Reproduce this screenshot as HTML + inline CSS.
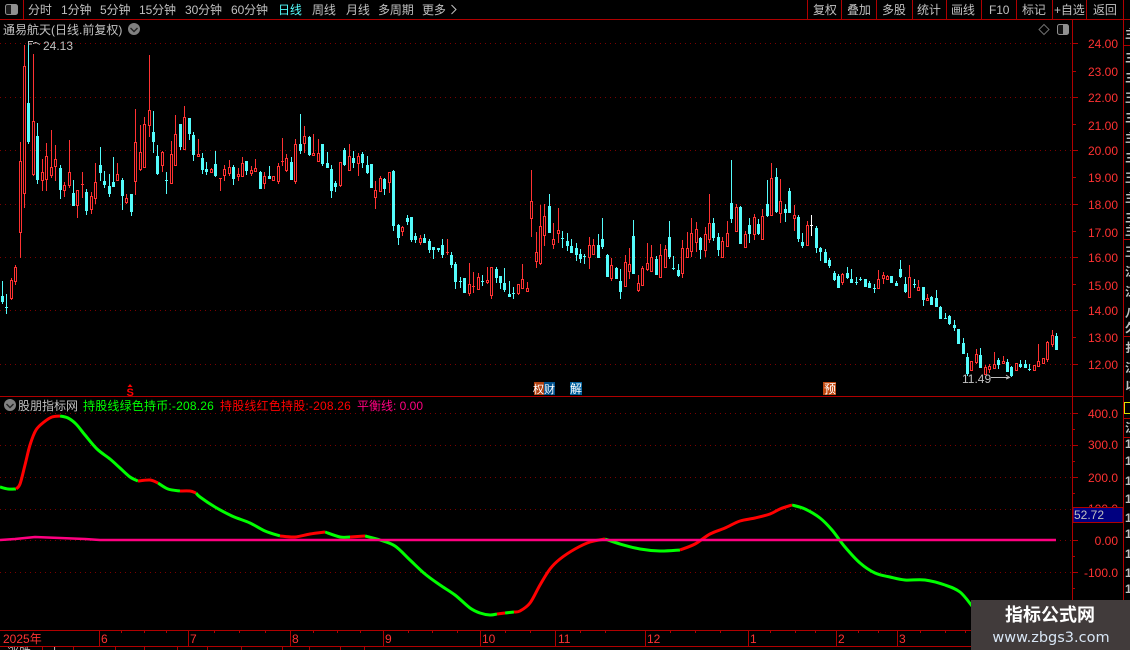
<!DOCTYPE html>
<html><head><meta charset="utf-8"><style>
html,body{margin:0;padding:0;background:#000;width:1130px;height:650px;overflow:hidden}
svg{display:block;position:absolute;left:0;top:0}
text{font-family:"Liberation Sans","WenQuanYi Zen Hei","Noto Sans CJK SC",sans-serif;font-size:12px;fill:#c0c0c0}
.ax{fill:#ff3232;text-anchor:end}
.cj{letter-spacing:-.1px}
.ls{letter-spacing:.2px}
</style></head><body>
<svg width="1130" height="650" viewBox="0 0 1130 650" xmlns="http://www.w3.org/2000/svg">
<rect width="1130" height="650" fill="#000"/>
<g stroke="#7c0000" stroke-dasharray="1 4" shape-rendering="crispEdges" fill="none">
<path d="M0 43.5H1072M0 97.5H1072M0 150.5H1072M0 204.5H1072M0 257.5H1072M0 310.5H1072M0 364.5H1072"/>
<path d="M0 413.5H1072M0 445.5H1072M0 477.5H1072M0 509.5H1072M0 540.5H1072M0 572.5H1072"/>
</g>
<g id="cd" shape-rendering="crispEdges"></g>

<g fill="none" stroke-width="3" stroke-linejoin="round" stroke-linecap="butt">
<g stroke="#00ff00">
<polyline class="sm" points="0,487 8,489 16,489"/>
<polyline class="sm" points="60,416 68,418 76,424 85,435 97,449 110,459 120,468 130,477 138,481"/>
<polyline class="sm" points="158,483 168,489 180,491"/>
<polyline class="sm" points="196,493 200,497 215,507 232,516 250,523 265,531 280,536"/>
<polyline class="sm" points="325,532 340,537 350,537"/>
<polyline class="sm" points="365,536 380,540 395,546 410,560 425,574 440,585 455,595 470,608 480,613 490,615 497,614"/>
<polyline class="sm" points="505,613 514,612"/>
<polyline class="sm" points="605,539 620,544 640,549 660,551 680,550"/>
<polyline class="sm" points="792,505 805,509 820,518 832,530 845,547 860,563 875,573 890,577 905,580 925,580 945,585 960,592 972,606"/>
</g>
<g stroke="#ff0000">
<polyline class="sm" points="16,489 20,484 25,465 30,445 36,430 44,422 52,417 60,416"/>
<polyline class="sm" points="138,481 150,480 158,483"/>
<polyline class="sm" points="180,491 190,491 196,493"/>
<polyline class="sm" points="280,536 295,537 310,534 325,532"/>
<polyline class="sm" points="350,537 365,536"/>
<polyline class="sm" points="497,614 505,613"/>
<polyline class="sm" points="514,612 520,611 530,603 540,585 550,569 560,559 575,549 590,542 605,539"/>
<polyline class="sm" points="680,550 695,544 710,534 725,528 740,521 755,518 770,514 780,509 792,505"/>
</g>
<polyline stroke="#ff0080" stroke-width="2.4" points="0,540 15,539 25,538 35,537 60,538 85,539 100,540 1056,540"/>
</g>

<g fill="none" stroke="#b00000" stroke-width="1" shape-rendering="crispEdges">
<path d="M0 19.5H1130M23.5 0V19M807.5 0V19M841.5 0V19M876.5 0V19M912.5 0V19M946.5 0V19M981.5 0V19M1016.5 0V19M1052.5 0V19M1086.5 0V19M1123.5 0V650M1072.5 19V646"/>
<path d="M0 396.5H1123M0 630.5H1123M0 646.5H1123"/>
<path d="M1123 45.5H1130M1123 239.5H1130M1123 336.5H1130M1123 418.5H1130M1123 437.5H1130"/>
<path d="M99.5 630V646M188.5 630V646M290.5 630V646M383.5 630V646M480.5 630V646M555.5 630V646M645.5 630V646M748.5 630V646M836.5 630V646M897.5 630V646"/>
<path d="M121.5 630V633M144.5 630V633M166.5 630V633M214.5 630V633M239.5 630V633M265.5 630V633M313.5 630V633M337.5 630V633M360.5 630V633M408.5 630V633M432.5 630V633M457.5 630V633M505.5 630V633M530.5 630V633M580.5 630V633M605.5 630V633M670.5 630V633M695.5 630V633M720.5 630V633M770.5 630V633M795.5 630V633M815.5 630V633M858.5 630V633M878.5 630V633M920.5 630V633M945.5 630V633M965.5 630V633"/>
<path d="M42.5 646V650M73.5 646V650M115.5 646V650M144.5 646V650M177.5 646V650M207.5 646V650M241.5 646V650M282.5 646V650M309.5 646V650M340.5 646V650M364.5 646V650"/>
<path d="M1073 43.5H1078M1073 71.5H1076M1073 97.5H1078M1073 124.5H1076M1073 150.5H1078M1073 177.5H1076M1073 204.5H1078M1073 231.5H1076M1073 257.5H1078M1073 284.5H1076M1073 310.5H1078M1073 337.5H1076M1073 364.5H1078"/>
<path d="M1073 413.5H1078M1073 429.5H1075M1073 445.5H1078M1073 461.5H1075M1073 477.5H1078M1073 493.5H1075M1073 540.5H1078M1073 556.5H1075M1073 572.5H1078M1073 588.5H1075"/>
</g>

<!-- top bar -->
<rect x="5.5" y="4.5" width="12" height="10" rx="2" fill="#1c1c1c" stroke="#909090"/>
<rect x="11" y="5" width="6" height="9" fill="#909090"/>
<g class="cj">
<text x="28" y="14">分时</text><text x="61" y="14">1分钟</text><text x="100" y="14">5分钟</text>
<text x="139" y="14">15分钟</text><text x="185" y="14">30分钟</text><text x="231" y="14">60分钟</text>
<text x="278" y="14" style="fill:#54fcfc">日线</text><text x="312" y="14">周线</text><text x="346" y="14">月线</text>
<text x="378" y="14">多周期</text><text x="422" y="14">更多</text>
<text x="813" y="14">复权</text><text x="847" y="14">叠加</text><text x="882" y="14">多股</text><text x="917" y="14">统计</text>
<text x="951" y="14">画线</text><text x="989" y="14">F10</text><text x="1022" y="14">标记</text><text x="1054" y="14">+自选</text><text x="1093" y="14">返回</text>
</g>
<path d="M451.5 5L456 9.5L451.5 14" fill="none" stroke="#c0c0c0"/>

<!-- title row -->
<text x="3" y="34">通易航天(日线.前复权)</text>
<circle cx="134" cy="29" r="6" fill="#808080"/><path d="M130.5 28L134 31.5L137.5 28" fill="none" stroke="#222" stroke-width="1.4"/>
<path d="M1044 24.5L1049 29.5L1044 34.5L1039 29.5Z" fill="none" stroke="#707070"/>
<rect x="1057.5" y="24.5" width="11" height="10" rx="2" fill="#111" stroke="#909090"/><rect x="1063" y="25" width="5" height="9" fill="#909090"/>

<!-- price notes -->
<path d="M28.5 45V41.5H33M29 44H32M33 43.5L36 42.5L40 44.5" fill="none" stroke="#c0c0c0" stroke-width="1" shape-rendering="crispEdges"/>
<text x="43" y="50">24.13</text>
<text x="962" y="383">11.49</text>
<path d="M991 377.5H1009M1006 375L1009.5 377.5L1006 379" fill="none" stroke="#c0c0c0"/>

<!-- axes -->
<g>
<text class="ax" x="1118" y="48">24.00</text><text class="ax" x="1118" y="76">23.00</text><text class="ax" x="1118" y="102">22.00</text>
<text class="ax" x="1118" y="130">21.00</text><text class="ax" x="1118" y="155">20.00</text><text class="ax" x="1118" y="182">19.00</text>
<text class="ax" x="1118" y="209">18.00</text><text class="ax" x="1118" y="237">17.00</text><text class="ax" x="1118" y="262">16.00</text>
<text class="ax" x="1118" y="290">15.00</text><text class="ax" x="1118" y="315">14.00</text><text class="ax" x="1118" y="342">13.00</text>
<text class="ax" x="1118" y="369">12.00</text>
<text class="ax" x="1118" y="418">400.0</text><text class="ax" x="1118" y="449">300.0</text><text class="ax" x="1118" y="482">200.0</text>
<text class="ax" x="1118" y="513">100.0</text><text class="ax" x="1118" y="545">0.00</text><text class="ax" x="1118" y="577">-100.0</text>
</g>
<rect x="1073" y="507.5" width="50" height="15" fill="#000080" stroke="#b00000" shape-rendering="crispEdges"/>
<text x="1074" y="519">52.72</text>

<!-- markers -->
<path d="M130 384L127.5 387H132.5Z" fill="#ff0000"/>
<text x="126.5" y="396" style="fill:#ff0000;font-weight:bold;font-size:11px">S</text>
<rect x="534" y="382" width="10" height="13" fill="#b04010"/><rect x="544" y="382" width="11" height="13" fill="#00508c"/>
<text x="533" y="393" style="fill:#fff;font-size:11px">权财</text>
<rect x="570" y="382" width="12" height="13" fill="#00609c"/><text x="570" y="393" style="fill:#fff">解</text>
<rect x="823" y="382" width="13" height="13" fill="#c04810"/><text x="824" y="393" style="fill:#fff">预</text>

<!-- indicator header -->
<circle cx="10" cy="405" r="6" fill="#808080"/><path d="M6.5 404L10 407.5L13.5 404" fill="none" stroke="#222" stroke-width="1.4"/>
<text x="18" y="410">股朋指标网</text>
<text class="ls" x="83" y="410" style="fill:#00ff00">持股线绿色持币:-208.26</text>
<text class="ls" x="220" y="410" style="fill:#ff0000">持股线红色持股:-208.26</text>
<text x="357" y="410" style="fill:#ff0080">平衡线: 0.00</text>

<!-- time axis -->
<g>
<text x="3" y="643" style="fill:#ff3232">2025年</text><text x="101" y="643" style="fill:#ff3232">6</text><text x="190" y="643" style="fill:#ff3232">7</text>
<text x="292" y="643" style="fill:#ff3232">8</text><text x="385" y="643" style="fill:#ff3232">9</text><text x="482" y="643" style="fill:#ff3232">10</text>
<text x="558" y="643" style="fill:#ff3232">11</text><text x="647" y="643" style="fill:#ff3232">12</text><text x="750" y="643" style="fill:#ff3232">1</text>
<text x="838" y="643" style="fill:#ff3232">2</text><text x="899" y="643" style="fill:#ff3232">3</text>
</g>
<text x="7" y="657">涨跌</text><text x="49" y="657">上</text>

<!-- right sidebar -->
<g style="font-weight:bold">
<text x="1125" y="38">主</text><text x="1125" y="62">三</text><text x="1125" y="82">三</text><text x="1125" y="102">王</text><text x="1125" y="122">三</text>
<text x="1125" y="142">主</text><text x="1125" y="162">三</text><text x="1125" y="182">王</text><text x="1125" y="202">主</text><text x="1125" y="222">三</text>
<text x="1125" y="235">主</text><text x="1125" y="256">王</text><text x="1125" y="276">江</text><text x="1125" y="296">江</text><text x="1125" y="317">八</text>
<text x="1125" y="332">久</text><text x="1125" y="352">扌</text><text x="1125" y="372">江</text><text x="1125" y="390">以</text>
<text x="1125" y="432">江</text>
<text x="1125" y="448">1</text><text x="1125" y="465">1</text><text x="1125" y="485">1</text><text x="1125" y="503">1</text><text x="1125" y="522">1</text>
<text x="1125" y="538">1</text><text x="1125" y="558">1</text><text x="1125" y="577">1</text><text x="1125" y="593">1</text>
</g>
<rect x="1124.5" y="402.5" width="8" height="11" fill="none" stroke="#e0e000" shape-rendering="crispEdges"/>

<!-- watermark -->
<rect x="971" y="600" width="159" height="50" fill="#413b3b"/>
<text x="1050" y="621" text-anchor="middle" style="fill:#fff;font-size:18px;font-weight:bold;font-family:'Noto Sans CJK SC','WenQuanYi Zen Hei',sans-serif">指标公式网</text>
<text x="1051" y="642" text-anchor="middle" style="fill:#d8e6f5;font-size:14.5px;font-family:'DejaVu Sans',sans-serif">www.zbgs3.com</text>
</svg>
<script>
var d="c281,296,301,304 c294,307,307,314 r278,280,298,300 r265,267,281,285 r142,161,232,258 r45,66,193,208 c43,103,141,144 r54,121,174,176 c123,136,179,184 r159,172,180,191 r143,156,179,191 r130,167,175,178 r145,159,166,181 c165,168,189,199 r182,185,190,197 r140,172,185,188 c180,193,205,206 r190,190,205,218 r172,184,184,198 c189,192,210,215 r192,196,209,214 r163,182,198,204 c147,165,172,181 c171,181,184,188 c174,186,193,197 c157,182,186,186 r163,174,180,181 c178,180,195,210 r194,198,202,204 c194,194,211,216 r109,142,181,195 r125,152,169,171 r117,124,167,167 r55,110,125,137 c111,132,141,153 c145,156,173,175 r151,152,165,172 c172,180,180,194 r141,154,183,184 r115,134,165,165 c124,124,146,150 r106,117,149,149 c118,118,133,140 c132,135,154,161 r139,154,156,156 c153,158,169,174 c162,169,171,175 r168,169,172,172 c151,164,175,177 r178,178,178,191 r165,169,175,181 r160,167,173,176 c165,167,178,185 r168,174,176,181 r157,163,176,176 c161,161,170,175 r166,170,173,176 r159,168,171,171 c171,172,188,189 r172,176,183,189 c166,176,178,179 r176,176,180,181 r163,166,181,184 r138,161,161,166 r154,158,170,172 c157,162,179,180 r139,144,181,184 c114,144,150,154 r126,136,143,153 c136,137,154,156 r134,153,155,155 r139,153,161,161 c144,144,163,166 c152,163,167,168 c165,169,190,198 c181,183,186,192 r162,162,185,187 c148,150,164,166 r144,156,170,171 c151,158,162,168 r153,156,163,176 c152,154,162,168 c156,165,172,174 c164,164,187,188 r181,190,197,209 r176,178,191,192 c178,179,188,195 r172,172,182,193 c170,171,225,231 c224,225,237,245 r226,227,231,236 c215,218,221,225 c217,217,239,242 c233,236,239,243 r235,238,242,245 c234,238,242,243 c239,241,249,253 c247,247,249,259 c248,248,249,252 c239,245,254,258 r239,252,252,255 c252,255,264,268 c262,264,281,289 c277,281,281,288 c278,278,292,293 r263,284,293,296 r272,286,286,293 r273,277,289,289 c275,281,281,286 r267,280,282,284 r267,267,295,299 c267,269,277,283 c276,276,282,289 c268,283,289,292 c281,294,296,296 c287,293,293,299 r284,284,293,295 r264,279,288,288 r282,288,291,291 r170,201,218,237 r232,252,261,268 r205,226,263,265 r204,216,235,246 c194,206,232,233 r223,239,244,249 r208,230,233,243 c231,238,238,248 c233,241,245,251 c239,246,252,253 c243,248,254,261 c249,254,258,263 c254,256,256,264 r237,245,257,269 r239,245,254,254 c234,245,257,258 c218,239,246,249 c254,255,276,276 r258,265,278,281 c267,268,278,278 c269,281,291,299 r255,262,286,287 r248,264,271,279 c220,236,273,273 r275,283,290,292 r266,268,285,285 r243,263,269,271 r245,257,271,272 c256,259,274,274 r244,255,277,278 r245,249,267,267 c221,237,256,259 c256,268,268,270 c264,270,275,277 r240,248,273,278 r232,248,257,257 r218,233,251,257 r222,229,242,252 c237,238,249,259 r227,234,250,257 r194,223,239,243 c218,223,237,241 c233,237,249,256 r237,241,257,257 r221,233,246,246 c160,203,218,223 r204,207,231,231 c206,207,243,244 r231,234,247,247 c218,225,233,243 r214,217,234,240 c219,224,233,235 r209,216,239,239 c180,204,215,217 r163,178,215,215 c168,177,211,213 r179,201,213,223 c204,209,212,222 c188,191,212,212 r205,215,218,231 c215,217,238,242 c233,242,245,248 r221,225,245,245 w215,225,225,236 c226,228,247,253 c247,248,251,261 c249,252,262,262 c258,260,265,268 c271,273,279,281 c274,276,287,288 r273,274,282,285 c267,273,277,279 c269,279,282,282 c277,282,282,285 c277,279,279,281 c279,279,286,287 c281,283,287,288 c284,288,288,293 r270,279,288,288 r272,275,278,284 r275,276,279,280 c276,276,282,283 c281,283,285,286 c260,269,276,278 c277,284,291,293 r265,277,297,297 c279,284,284,288 r280,287,290,291 c287,287,299,306 r294,298,300,301 c296,297,304,304 c290,298,306,306 c306,307,318,318 c313,318,318,319 c315,316,323,325 c320,325,327,331 c329,329,343,343 c338,343,353,353 c353,357,373,376 r361,361,370,370 r349,354,362,364 c348,355,367,367 r365,367,374,374 r364,366,369,373 r352,364,368,369 c358,360,364,369 r356,361,363,364 c359,362,371,372 c366,367,375,377 r363,363,370,370 c360,364,366,368 c360,364,367,368 c364,369,369,371 r365,365,370,370 r344,361,366,366 r358,358,363,363 r341,342,359,362 r330,335,344,347 c333,336,349,349".split(" ");
var s="",CY="#54fcfc",RD="#ff3232";
function R(x,y,w,h,f){return '<rect x="'+x+'" y="'+y+'" width="'+w+'" height="'+h+'" fill="'+f+'"/>';}
d.forEach(function(e,i){
 var k=e[0],p=e.slice(1).split(",").map(Number),X=Math.floor(2.3+4.448*i);
 var col=k=="r"?RD:k=="c"?CY:"#ffffff";
 s+=R(X,p[0],1,Math.max(p[3]-p[0],1),col);
 if(p[1]==p[2]){s+=R(X-1,p[1],3,1,col);}
 else if(k=="c"){s+=R(X-1,p[1],3,p[2]-p[1]+1,col);}
 else{s+=R(X-1,p[1],3,p[2]-p[1]+1,col);if(p[2]-p[1]>1)s+=R(X,p[1]+1,1,p[2]-p[1]-1,"#000");}
});
document.getElementById("cd").innerHTML=s;
// smooth the indicator polylines with Catmull-Rom curves
var all=[].slice.call(document.querySelectorAll("polyline.sm"));
all.forEach(function(pl){
 var P=pl.getAttribute("points").split(" ").map(function(q){return q.split(",").map(Number);});
 var a="M"+P[0][0]+" "+P[0][1];
 for(var i=0;i<P.length-1;i++){
  var p0=P[Math.max(i-1,0)],p1=P[i],p2=P[i+1],p3=P[Math.min(i+2,P.length-1)];
  a+="C"+(p1[0]+(p2[0]-p0[0])/6)+" "+(p1[1]+(p2[1]-p0[1])/6)+" "+(p2[0]-(p3[0]-p1[0])/6)+" "+(p2[1]-(p3[1]-p1[1])/6)+" "+p2[0]+" "+p2[1];
 }
 var n=document.createElementNS("http://www.w3.org/2000/svg","path");
 n.setAttribute("d",a);
 pl.parentNode.replaceChild(n,pl);
});
</script>
</body></html>
